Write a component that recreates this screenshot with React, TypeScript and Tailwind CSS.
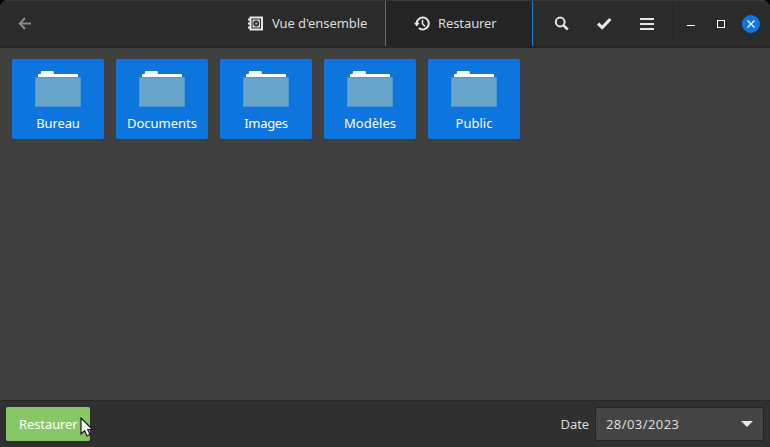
import React from "react";

const folders = [
  { name: "Bureau", spacing: "tracking-[-0.15px]" },
  { name: "Documents", spacing: "tracking-[0px]" },
  { name: "Images", spacing: "tracking-[-0.3px]" },
  { name: "Modèles", spacing: "tracking-[0px]" },
  { name: "Public", spacing: "tracking-[0px]" },
];

function BackIcon() {
  return (
    <svg width="14" height="14" viewBox="0 0 14 14" fill="none" stroke="#8b8b8b" strokeWidth="2">
      <path d="M13 6.5H2.5M7 1L1.8 6.5L7 12" />
    </svg>
  );
}

function SafeIcon() {
  return (
    <svg width="16" height="16" viewBox="0 0 16 16" fill="none" stroke="#e6e6e6">
      <path d="M2.5 1.5H14V13.5H2.5Z" strokeWidth="2" />
      <path d="M0 3.5H2M0 7.5H2M0 11.5H2" strokeWidth="2" />
      <path d="M4.5 3.5H12V11.5H4.5Z" fill="#d4d4d4" stroke="none" />
      <circle cx="8.3" cy="7.5" r="2.1" strokeWidth="1.6" stroke="#2b2b2b" fill="#a0a0a0" />
    </svg>
  );
}

function HistoryIcon() {
  return (
    <svg width="16" height="16" viewBox="0 0 16 16" fill="none" stroke="#e6e6e6">
      <path d="M2.8 8.2A6 6 0 1 1 4.8 12" strokeWidth="2" />
      <path d="M0 6.8H5.6L2.8 10.4Z" fill="#e6e6e6" stroke="none" />
      <path d="M8.5 3.8V7.7L11 10.5" strokeWidth="1.5" />
    </svg>
  );
}

function SearchIcon() {
  return (
    <svg width="16" height="16" viewBox="0 0 16 16" fill="none" stroke="#e6e6e6">
      <circle cx="6.2" cy="6" r="4.4" strokeWidth="2" />
      <path d="M9.4 9.3L13.8 13.5" strokeWidth="2.5" />
    </svg>
  );
}

function CheckIcon() {
  return (
    <svg width="16" height="16" viewBox="0 0 16 16" fill="none" stroke="#e6e6e6" strokeWidth="3.2">
      <path d="M2 7.6L6.2 11.6L14.4 3" />
    </svg>
  );
}

function FolderIcon() {
  return (
    <svg width="46" height="36" viewBox="0 0 46 36">
      <path d="M3 7V4.2Q3 3 4.2 3H5.8V1.2Q5.8 0 7 0H17.6Q18.8 0 18.8 1.2V3H42Q43 3 43 4V7Z" fill="#fff" />
      <rect x="0" y="6" width="46" height="30" rx="1" fill="#4b99ce" />
      <rect x="1" y="7" width="44" height="28" fill="#67a6ca" />
    </svg>
  );
}

export default function App() {
  return (
    <div className="h-[447px] w-[770px] overflow-hidden bg-black font-['Noto_Sans',sans-serif] text-[13px] text-[#dcdcdc]">
      <div className="flex h-full flex-col overflow-hidden rounded-t-[8px] bg-[#404040]">
        <header className="flex h-12 shrink-0 items-stretch border-t border-b-2 border-t-[#393939] border-b-[#242424] bg-[#2b2b2b]">
          <button className="flex w-[50px] items-center justify-center" aria-label="Retour">
            <BackIcon />
          </button>
          <nav className="ml-auto flex items-stretch">
            <button className="flex w-[155px] items-center gap-[8px] pl-[18px]">
              <SafeIcon />
              <span className="whitespace-nowrap tracking-[-0.08px]">Vue d'ensemble</span>
            </button>
            <span className="w-px bg-[#1a7bd6]" />
            <button className="flex w-[146px] items-center gap-[8px] bg-[#242424] pl-[28px]">
              <HistoryIcon />
              <span className="tracking-[-0.1px]">Restaurer</span>
            </button>
            <span className="w-px bg-[#1a7bd6]" />
          </nav>
          <div className="flex w-[139px] items-center pl-[21px]">
            <SearchIcon />
            <span className="ml-[26px]"><CheckIcon /></span>
            <span className="ml-[28px] flex flex-col gap-[3px]">
              <span className="h-[2px] w-[14px] bg-[#e6e6e6]" />
              <span className="h-[2px] w-[14px] bg-[#e6e6e6]" />
              <span className="h-[2px] w-[14px] bg-[#e6e6e6]" />
            </span>
          </div>
          <div className="flex w-[98px] items-center border-l border-[#272727] pl-[14px]">
            <span className="mt-[4px] h-px w-2 bg-white" />
            <span className="ml-[22px] size-2 border border-white" />
            <span className="ml-[17px] flex size-[18px] items-center justify-center rounded-full bg-[#0f76e0]">
              <svg width="8" height="8" viewBox="0 0 8 8" stroke="#fff" strokeWidth="1.2">
                <path d="M0.5 0.5L7.5 7.5M7.5 0.5L0.5 7.5" />
              </svg>
            </span>
          </div>
        </header>

        <main className="flex flex-1 items-start gap-3 px-3 pt-[11px]">
          {folders.map((folder) => (
            <div key={folder.name} className="flex h-20 w-[92px] flex-col items-center rounded-[2px] bg-[#0c75de] pt-[12px] text-white">
              <FolderIcon />
              <span className={`mt-[7px] leading-[18px] ${folder.spacing}`}>{folder.name}</span>
            </div>
          ))}
        </main>

        <footer className="flex h-[47px] shrink-0 items-center border-t border-[#282828] bg-[#303030] pr-[6px] pl-[6px]">
          <button className="relative h-[34px] w-[84px] rounded-[2px] bg-[#87c766] pt-[2px] pl-[13px] text-left tracking-[-0.1px] text-white">
            Restaurer
            <svg className="absolute top-[10px] left-[74px]" width="14" height="21" viewBox="0 0 14 21">
              <path d="M1 1V17L4.6 13.7L7 19L10 17.6L7.7 12.5H12.5Z" fill="#fff" stroke="#171717" strokeWidth="1.2" />
            </svg>
          </button>
          <span className="ml-auto pt-[2px] tracking-[-0.1px]">Date</span>
          <button className="ml-[6px] flex h-[34px] w-[169px] items-center justify-between rounded-[2px] border border-[#252525] bg-[#444444] pr-[10px] pl-[10px]">
            <span className="pt-[2px] tracking-[0.42px]">28/03/2023</span>
            <svg width="12" height="6" viewBox="0 0 12 6" fill="#e6e6e6">
              <path d="M0 0H12L6 6Z" />
            </svg>
          </button>
        </footer>
      </div>
    </div>
  );
}
